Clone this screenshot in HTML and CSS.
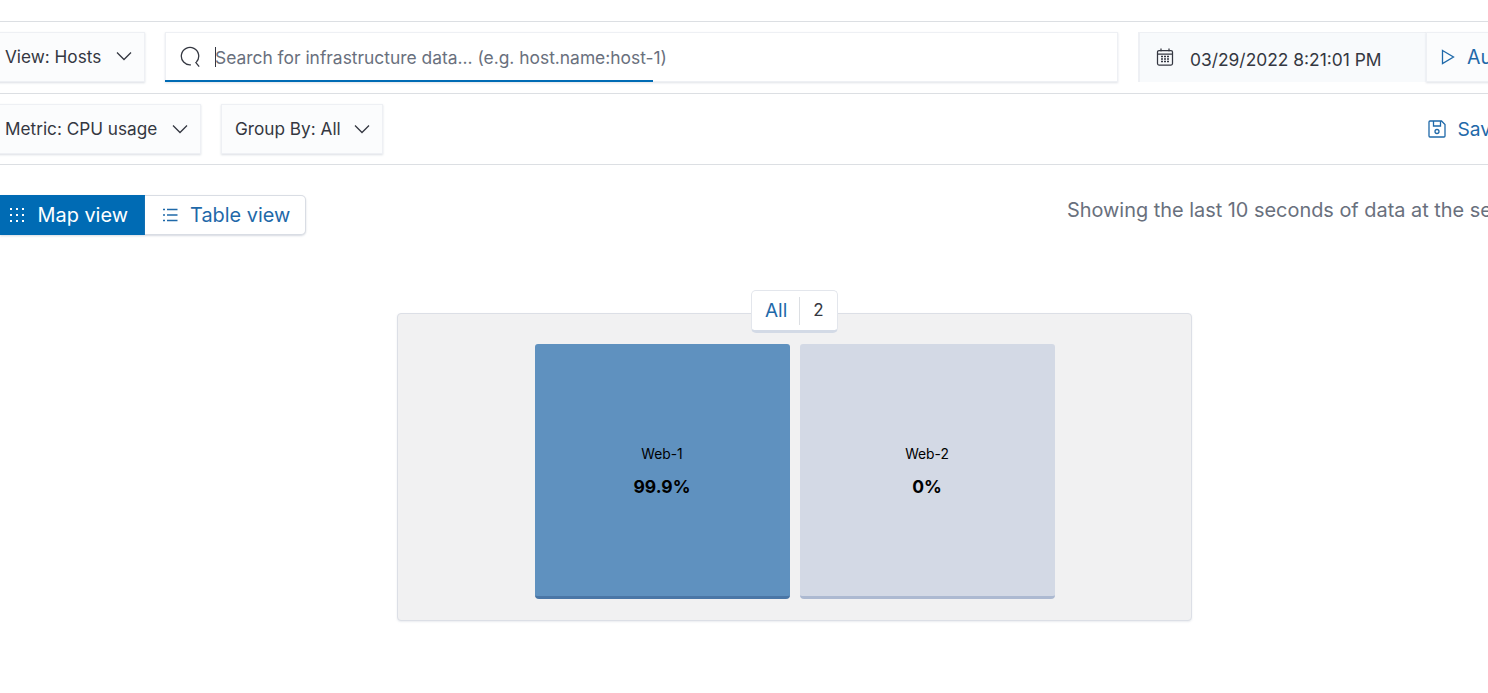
FILE: index.html
```html
<!DOCTYPE html>
<html lang="en">
<head>
    <meta charset="UTF-8">
    <meta name="viewport" content="width=device-width, initial-scale=1.0">
    <title>Infrastructure inventory</title>
    <link rel="stylesheet" href="styles.css">
</head>

<body>
    <div class="bar bar-search">
        <button class="select select-view">
            <span>View: Hosts</span>
            <svg class="chevron" viewBox="0 0 16 10"><path d="M1 1.5 8 8.5 15 1.5"/></svg>
        </button>
        <div class="search">
            <svg class="search-icon" viewBox="0 0 24 24"><path d="M19 17.5A9.500 9.500 0 1 0 13 20.500M18 17.500 22 22.500"/></svg>
            <span class="caret"></span>
            <span class="placeholder">Search for infrastructure data... (e.g. host.name:host-1)</span>
        </div>
        <div class="date">
            <svg class="date-icon" viewBox="0 0 18 18">
                <path d="M3 2.500h12a1.500 1.500 0 0 1 1.500 1.500v11.500a1.500 1.500 0 0 1-1.500 1.500H3a1.500 1.500 0 0 1-1.500-1.500V4A1.500 1.500 0 0 1 3 2.500ZM1.500 6h15M5 .5v3M13 .5v3"/>
                <path class="dots" d="M5 8.500h2M8 8.500h2M11 8.500h2M5 11h2M8 11h2M11 11h2M5 13.500h2M8 13.500h2M11 13.500h2"/>
            </svg>
            <span>03/29/2022 8:21:01 PM</span>
        </div>
        <button class="auto">
            <svg class="play" viewBox="0 0 14 16"><path d="M1.500 1.500 12.500 8 1.500 14.500Z"/></svg>
            <span>Auto-refresh</span>
        </button>
    </div>

    <div class="bar bar-filters">
        <button class="select select-metric">
            <span>Metric: CPU usage</span>
            <svg class="chevron" viewBox="0 0 16 10"><path d="M1 1.500 8 8.500 15 1.500"/></svg>
        </button>
        <button class="select select-group">
            <span>Group By: All</span>
            <svg class="chevron" viewBox="0 0 16 10"><path d="M1 1.500 8 8.500 15 1.500"/></svg>
        </button>
        <button class="save">
            <svg class="save-icon" viewBox="0 0 18 18">
                <path d="M2 1h11.500L17 4.500V16a1 1 0 0 1-1 1H2a1 1 0 0 1-1-1V2a1 1 0 0 1 1-1ZM5.500 1v5h7V1"/>
                <circle cx="9" cy="11.500" r="2"/>
            </svg>
            <span>Save</span>
        </button>
    </div>

    <div class="toolbar">
        <div class="tabs">
            <button class="tab tab-active">
                <svg class="tab-icon tab-icon-dots" viewBox="0 0 16 16">
                    <path d="M1 2h2M7 2h2M13 2h2M1 8h2M7 8h2M13 8h2M1 14h2M7 14h2M13 14h2"/>
                </svg>
                <span>Map view</span>
            </button>
            <button class="tab">
                <svg class="tab-icon" viewBox="0 0 16 16">
                    <path d="M1 2.500h2M5 2.500h10.500M1 8h2M5 8h10.500M1 13.500h2M5 13.500h10.500"/>
                </svg>
                <span>Table view</span>
            </button>
        </div>
        <p class="notice">Showing the last 10 seconds of data at the selected time</p>
    </div>

    <div class="map">
        <div class="group">
            <div class="group-badge">
                <span class="group-name">All</span>
                <span class="group-count">2</span>
            </div>
            <div class="node node-high">
                <span class="node-name">Web-1</span>
                <span class="node-value">99.9%</span>
            </div>
            <div class="node node-low">
                <span class="node-name">Web-2</span>
                <span class="node-value">0%</span>
            </div>
        </div>
    </div>
</body>
</html>
```

FILE: styles.css
```css
body {
    font-family: Inter, "Noto Sans", sans-serif;
    background-color: #fff;
    color: #343741;
    margin: 0;
    padding: 21px 0 0;
    height: 672px;
    overflow: hidden;
}

button {
    font-family: inherit;
    cursor: pointer;
}

svg {
    fill: none;
    stroke: currentColor;
    flex-shrink: 0;
}

.bar {
    display: flex;
    border-top: 1px solid #dcdfe3;
    padding: 10px 0;
    height: 50px;
    width: 1700px;
}

.bar > * {
    flex-shrink: 0;
}

.bar-search {
    padding-bottom: 11px;
}

.select {
    display: flex;
    align-items: center;
    justify-content: space-between;
    height: 50px;
    padding: 0 12px 0 14px;
    background-color: #fbfcfd;
    border: 1px solid #eef0f4;
    box-shadow: 0 1px 2px rgba(152, 162, 179, 0.35);
    color: #343741;
    font-size: 17.2px;
}

.select-view {
    margin-left: -10px;
    width: 155px;
    padding-bottom: 2px;
}

.select-metric {
    margin-left: -10px;
    width: 210.5px;
    padding-right: 11.5px;
    padding-bottom: 1px;
}

.select-group {
    margin-left: 20.5px;
    width: 162px;
    padding-left: 13px;
    padding-bottom: 1px;
}

.chevron {
    width: 16px;
    height: 10px;
    stroke-width: 1.3;
    color: #343741;
}

.search {
    display: flex;
    align-items: center;
    position: relative;
    margin-left: 20px;
    width: 953px;
    height: 50px;
    box-sizing: border-box;
    padding-left: 13px;
    background-color: #fff;
    border: 1px solid #eef0f4;
    box-shadow: 0 1px 2px rgba(152, 162, 179, 0.3);
}

.search::after {
    content: "";
    position: absolute;
    left: -1px;
    bottom: -1px;
    width: 488px;
    height: 2px;
    background-color: #006bb4;
}

.search-icon {
    width: 22px;
    height: 22px;
    stroke-width: 1.4;
    color: #343741;
}

.caret {
    width: 1px;
    height: 20px;
    margin-left: 14px;
    background-color: #343741;
}

.placeholder {
    margin-left: -1px;
    padding-top: 1px;
    color: #69707d;
    font-size: 17.4px;
}

.date {
    display: flex;
    align-items: center;
    margin-left: 20px;
    width: 288px;
    height: 50px;
    box-sizing: border-box;
    padding: 4px 0 0 16px;
    background-color: #f8fafc;
    border-top: 1px solid #eef0f4;
    border-left: 2px solid #eef0f4;
    font-size: 17.4px;
    color: #343741;
}

.date span {
    margin-left: 16px;
}

.date-icon {
    width: 18px;
    height: 18px;
    stroke-width: 1.25;
    margin-top: -5px;
}

.date-icon .dots {
    stroke-width: 1.6;
}

.auto {
    display: flex;
    align-items: center;
    width: 200px;
    height: 50px;
    padding: 0 0 0 14px;
    background-color: #fbfcfd;
    border: 1px solid #eef0f4;
    box-shadow: 0 1px 2px rgba(152, 162, 179, 0.3);
    color: #1f69a9;
    font-size: 19.5px;
}

.auto span {
    margin-left: 12px;
}

.play {
    width: 14px;
    height: 16px;
    stroke-width: 1.3;
}

.save {
    display: flex;
    align-items: center;
    margin-left: 1045px;
    padding: 0;
    background: none;
    border: 0;
    color: #1f69a9;
    font-size: 19.2px;
}

.save span {
    margin-left: 11.5px;
}

.save-icon {
    width: 18px;
    height: 18px;
    stroke-width: 1.3;
}

.toolbar {
    display: flex;
    justify-content: space-between;
    border-top: 1px solid #dcdfe3;
    padding-top: 30px;
    width: 1488px;
    height: 60px;
}

.tabs {
    display: flex;
    height: 40px;
}

.tab {
    display: flex;
    align-items: center;
    width: 161px;
    height: 40px;
    padding: 0 0 0 17px;
    background-color: #fff;
    border: 1px solid #d9dde4;
    border-left: 0;
    border-radius: 0 5px 5px 0;
    box-shadow: 0 1px 2px rgba(152, 162, 179, 0.4);
    color: #1f69a9;
    font-size: 19.9px;
}

.tab span {
    margin-left: 12px;
}

.tab-active {
    width: 145px;
    padding-left: 9px;
    background-color: #006bb4;
    border: 0;
    border-radius: 0;
    color: #fff;
}

.tab-active span {
    margin-left: 12.5px;
}

.tab-icon {
    width: 16px;
    height: 16px;
    stroke-width: 1.4;
}

.tab-icon-dots {
    stroke-width: 2;
}

.notice {
    margin: 1px 0 0;
    color: #69707d;
    font-size: 19.9px;
    line-height: 28px;
    height: 30px;
    white-space: nowrap;
    width: 421px;
    overflow: hidden;
}

.map {
    padding: 58px 0 0 397px;
}

.group {
    display: flex;
    justify-content: center;
    gap: 10px;
    position: relative;
    width: 795px;
    height: 308px;
    padding-top: 30px;
    box-sizing: border-box;
    background-color: #f1f1f2;
    border: 1px solid #dcdfe6;
    border-radius: 4px;
    box-shadow: 0 1px 2px rgba(152, 162, 179, 0.2);
}

.group-badge {
    display: flex;
    align-items: center;
    position: absolute;
    top: -24px;
    left: 353px;
    height: 43px;
    box-sizing: border-box;
    background-color: #fff;
    border: 1px solid #e3e6ec;
    border-bottom: 3px solid #d3dae6;
    border-radius: 5px;
}

.group-name {
    padding: 0 12px 0 13px;
    color: #1f69a9;
    font-size: 19px;
    line-height: 28px;
    border-right: 1px solid #dcdfe3;
}

.group-count {
    padding: 0 13px 2px 13px;
    font-size: 17px;
}

.node {
    display: flex;
    flex-direction: column;
    align-items: center;
    justify-content: center;
    width: 255px;
    height: 255px;
    box-sizing: border-box;
    border-radius: 3px 3px 4px 4px;
    color: #000;
}

.node-high {
    background-color: #5f91bf;
    border-bottom: 3px solid #4a76a6;
}

.node-low {
    background-color: #d3d9e5;
    border-bottom: 3px solid #acb9d1;
}

.node-name {
    font-size: 13.8px;
    line-height: 20px;
}

.node-value {
    margin-top: 13px;
    font-size: 17.5px;
    font-weight: 700;
    line-height: 20px;
}
```
